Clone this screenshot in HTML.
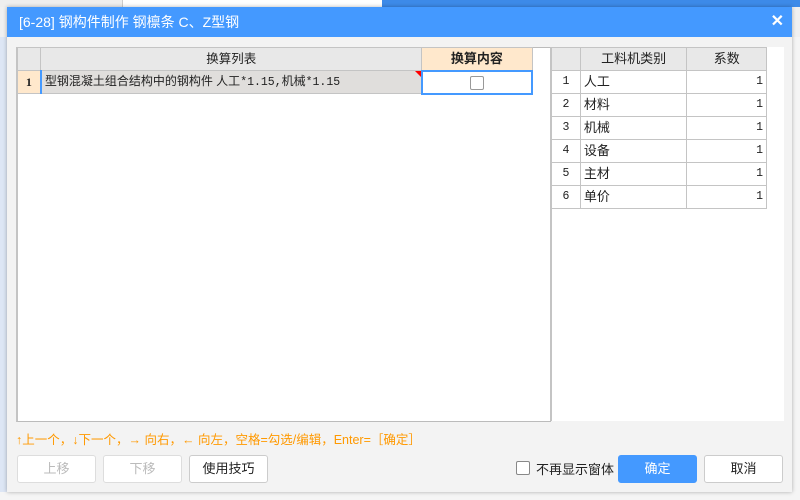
<!DOCTYPE html>
<html><head><meta charset="utf-8"><style>
*{box-sizing:border-box;margin:0;padding:0}
body{width:800px;height:500px;overflow:hidden;position:relative;background:#f0f0f0;font-family:"Liberation Sans","Noto Sans CJK SC",sans-serif;font-size:12px;color:#222}
.abs{position:absolute}
.dlg{left:7px;top:7px;width:785px;height:485px;background:#f3f3f3;box-shadow:0 0 4px rgba(0,0,0,.3)}
.title{left:0;top:0;width:785px;height:30px;background:#4499ff;color:#fff;font-size:14px;line-height:30px;padding-left:12px}
table{border-collapse:collapse;position:absolute}
td{border:1px solid #c4c4c4;height:23px;line-height:20px;padding:0 3px;white-space:nowrap;vertical-align:middle}
.btn{position:absolute;top:448px;height:28px;width:79px;border:1px solid #ccc;border-radius:3px;background:#fff;text-align:center;line-height:26px;font-size:13px}
.n{font-family:"Liberation Mono",monospace;font-size:11.5px}
</style></head><body>
<div class="abs" style="left:0;top:0;width:122px;height:7px;background:#eee"></div>
<div class="abs" style="left:122px;top:0;width:260px;height:7px;background:#fff;border-left:1px solid #ccc"></div>
<div class="abs" style="left:382px;top:0;width:418px;height:7px;background:#3d8ae8"></div>
<div class="abs" style="left:0;top:37px;width:7px;height:455px;background:#dde6f5"></div>
<div class="abs" style="left:792px;top:37px;width:8px;height:455px;background:#f5f5f5"></div>
<div class="abs" style="left:0;top:492px;width:800px;height:8px;background:#f5f5f5"></div>
<div class="abs dlg">
<div class="abs title">[6-28] 钢构件制作 钢檩条 C、Z型钢<span style="position:absolute;right:8px;top:0;font-size:16px;font-weight:bold">✕</span></div>
<div class="abs" style="left:9px;top:40px;width:535px;height:375px;background:#fff;border:1px solid #bbb;border-left:2px solid #c4c4c4"></div>
<table style="left:9px;top:40px;width:517px">
<tr style="background:#e8e8e8"><td style="width:24px;border-left:2px solid #c4c4c4"></td><td style="width:382px;text-align:center;font-size:12.5px">换算列表</td><td style="width:111px;text-align:center;background:#ffe8cc;font-weight:bold;font-size:13px">换算内容</td></tr>
<tr><td style="background:#ffe8cc;text-align:center;font-weight:bold;border-left:2px solid #c4c4c4;font-family:'Liberation Serif',serif">1</td><td style="background:#e0dedc;border-left:2px solid #4499ff;font-size:12px;position:relative">型钢混凝土组合结构中的钢构件 人工<span class="n">*1.15,</span>机械<span class="n">*1.15</span><span style="position:absolute;right:0;top:0;width:0;height:0;border-top:6px solid red;border-left:6px solid transparent"></span></td><td style="border:2px solid #4499ff;text-align:center"><span style="display:inline-block;width:14px;height:14px;border:1px solid #999;border-radius:2px;vertical-align:middle"></span></td></tr>
</table>
<div class="abs" style="left:543px;top:40px;width:234px;height:374px;background:#fff;border-left:2px solid #c4c4c4"></div>
<table style="left:544px;top:40px;width:216px;font-size:13px">
<tr style="background:#e8e8e8"><td style="width:29px"></td><td style="width:107px;text-align:center">工料机类别</td><td style="width:80px;text-align:center">系数</td></tr>
<tr><td class="n" style="text-align:center">1</td><td>人工</td><td class="n" style="text-align:right">1</td></tr>
<tr><td class="n" style="text-align:center">2</td><td>材料</td><td class="n" style="text-align:right">1</td></tr>
<tr><td class="n" style="text-align:center">3</td><td>机械</td><td class="n" style="text-align:right">1</td></tr>
<tr><td class="n" style="text-align:center">4</td><td>设备</td><td class="n" style="text-align:right">1</td></tr>
<tr><td class="n" style="text-align:center">5</td><td>主材</td><td class="n" style="text-align:right">1</td></tr>
<tr><td class="n" style="text-align:center">6</td><td>单价</td><td class="n" style="text-align:right">1</td></tr>
</table>
<div class="abs" style="left:9px;top:422px;color:#ff9900;font-size:12.5px">↑上一个，↓下一个，→ 向右，← 向左，空格=勾选/编辑，Enter=［确定］</div>
<div class="btn" style="left:10px;color:#bbb;border-color:#ddd">上移</div>
<div class="btn" style="left:96px;color:#bbb;border-color:#ddd">下移</div>
<div class="btn" style="left:182px">使用技巧</div>
<div class="abs" style="left:509px;top:454px;width:14px;height:14px;border:1px solid #888;border-radius:2px;background:#fff"></div>
<div class="abs" style="left:529px;top:452px;font-size:13px">不再显示窗体</div>
<div class="btn" style="left:611px;background:#4499ff;border-color:#4499ff;color:#fff">确定</div>
<div class="btn" style="left:697px">取消</div>
</div>
</body></html>
